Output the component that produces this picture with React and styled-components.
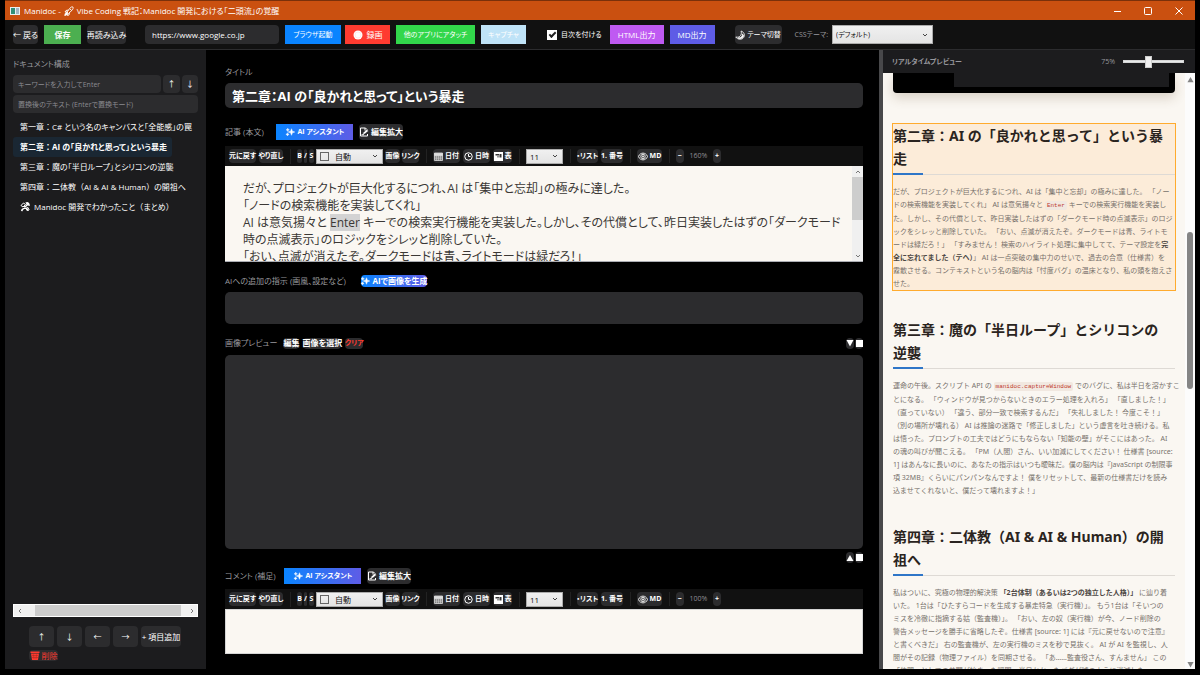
import React from "react";
import styled, { createGlobalStyle, css } from "styled-components";

const GlobalStyle = createGlobalStyle`
  *, *::before, *::after { box-sizing: border-box; }
  html, body { margin: 0; background: #000; }
  body, button, input, select, textarea {
    font-family: "Open Sans", "Noto Sans CJK JP", sans-serif;
    font-feature-settings: "palt";
  }
  button, input, select, textarea { margin: 0; border: 0; padding: 0; outline: 0; }
  button { white-space: nowrap; }
  svg { display: block; flex: none; }
`;

const Window = styled.div`
  height: 100vh;
  padding: 0 5px 6px;
  display: flex;
  flex-direction: column;
  overflow: hidden;
  color: #fff;
  background: #000;
  font-size: 8px;
  line-height: 12px;
`;

/* ---------- title bar ---------- */

const TitleBar = styled.header`
  flex: none;
  height: 20px;
  display: flex;
  align-items: center;
  gap: 4px;
  padding: 0 1px 0 5px;
  border-top: 1px solid #7a300a;
  background: #ca5010;
`;

const WindowTitle = styled.h1`
  margin: 0;
  flex: 1;
  display: flex;
  align-items: center;
  gap: 3px;
  font-size: 8px;
  font-weight: 400;
  white-space: nowrap;
`;

const WindowButtons = styled.div`
  display: flex;
`;

const WindowButton = styled.button`
  width: 31px;
  height: 18px;
  display: flex;
  align-items: center;
  justify-content: center;
  color: #fff;
  background: transparent;
`;

/* ---------- main toolbar ---------- */

const Toolbar = styled.nav`
  flex: none;
  height: 30px;
  display: flex;
  align-items: center;
  padding: 0 8px;
  border-bottom: 1px solid #2c2c2e;
  background: #111;
`;

const ToolGroup = styled.div`
  display: flex;
  align-items: center;
  gap: ${(p) => p.$gap || 6}px;
  margin-right: ${(p) => p.$after || 0}px;
`;

const Button = styled.button`
  width: ${(p) => p.$w}px;
  height: ${(p) => p.$h || 19}px;
  display: flex;
  align-items: center;
  justify-content: center;
  gap: ${(p) => p.$gap || 2}px;
  border-radius: 4px;
  font-size: ${(p) => (p.$small ? 7 : 8)}px;
  font-weight: ${(p) => (p.$bold ? 700 : 400)};
  line-height: 12px;
  color: ${(p) => p.$color || "#fff"};
  background: ${(p) => p.$bg || "#2c2c2e"};
  ${(p) => p.$square && css`border-radius: 0;`}
`;

const FormatButton = styled(Button).attrs({ $h: 14, $bold: true, $small: true })``;

const UrlInput = styled.input`
  width: 134px;
  height: 19px;
  padding: 0 7px;
  border-radius: 4px;
  font-size: 8px;
  color: #fff;
  background: #2c2c2e;
`;

const CheckLabel = styled.label`
  display: flex;
  align-items: center;
  gap: 4px;
  padding-right: 2px;
  font-size: 7px;
  white-space: nowrap;
`;

const CheckBox = styled.input`
  appearance: none;
  width: 10px;
  height: 10px;
  display: grid;
  place-items: center;
  background: #fff;
  &:checked::before {
    content: "";
    width: 7px;
    height: 4px;
    border: solid #222;
    border-width: 0 0 2px 2px;
    transform: translateY(-1px) rotate(-45deg);
  }
`;

const FieldLabel = styled.label`
  font-size: ${(p) => (p.$small ? 7 : 8)}px;
  line-height: 12px;
  color: #98989d;
  white-space: nowrap;
`;

const SelectBox = styled.span`
  width: ${(p) => p.$w}px;
  height: ${(p) => p.$h}px;
  display: flex;
  align-items: center;
  gap: 4px;
  padding: 0 4px 0 3px;
  border: 1px solid #acacac;
  color: #444;
  background: linear-gradient(#f0f0f0, #e4e4e4);
`;

const Swatch = styled.span`
  width: 9px;
  height: 9px;
  margin-right: 2px;
  border: 1px solid #666;
`;

const Select = styled.select`
  appearance: none;
  flex: 1;
  min-width: 0;
  font-size: ${(p) => (p.$small ? 7 : 8)}px;
  color: #111;
  background: transparent;
`;

/* ---------- body columns ---------- */

const Columns = styled.div`
  flex: 1;
  min-height: 0;
  display: flex;
`;

const Sidebar = styled.aside`
  flex: none;
  width: 201px;
  display: flex;
  flex-direction: column;
  padding: 8px;
  background: #1c1c1e;
`;

const SideHeading = styled.h2`
  margin: 0 0 5px;
  font-size: 8px;
  font-weight: 400;
  line-height: 12px;
  color: #98989d;
`;

const SearchRow = styled.div`
  display: flex;
  gap: 2px;
  margin-bottom: 2px;
`;

const SideInput = styled.input`
  flex: 1;
  min-width: 0;
  width: 100%;
  height: 18px;
  padding: 0 5px;
  border-radius: 4px;
  font-size: 7px;
  color: #fff;
  background: #2c2c2e;
  &::placeholder { color: #8b8b90; opacity: 1; }
`;

const Tree = styled.ul`
  flex: 1;
  margin: 2px 0 0;
  padding: 0;
  list-style: none;
  overflow: hidden;
`;

const TreeItem = styled.li`
  width: fit-content;
  height: 20px;
  display: flex;
  align-items: center;
  gap: 4px;
  padding: 0 5px 0 7px;
  border-radius: 3px;
  font-size: 8px;
  font-weight: ${(p) => (p.$active ? 700 : 400)};
  white-space: nowrap;
  background: ${(p) => (p.$active ? "#1a2733" : "transparent")};
`;

const FullWidth = styled.span`
  font-feature-settings: normal;
`;

const HScroll = styled.div`
  flex: none;
  height: 13px;
  display: flex;
  align-items: stretch;
  border: 1px solid #fff;
  color: #777;
  background: #f0f0f0;
`;

const ScrollEnd = styled.span`
  flex: none;
  width: 11px;
  min-height: 11px;
  display: flex;
  align-items: center;
  justify-content: center;
`;

const HThumb = styled.span`
  flex: 1;
  margin: 0 5px 0 10px;
  background: #cdcdcd;
`;

const NodeActions = styled.div`
  display: flex;
  flex-wrap: wrap;
  gap: 3px;
  padding: 9px 8px 0 16px;
`;

/* ---------- editor column ---------- */

const Editor = styled.main`
  flex: 1;
  min-width: 0;
  display: flex;
  flex-direction: column;
  padding: 16px 16px 15px 19px;
  background: #000;
`;

const TitleInput = styled.input`
  width: 100%;
  height: 25px;
  margin: 5px 0 16px;
  padding: 0 7px;
  border-radius: 5px;
  font-size: 13px;
  font-weight: 700;
  color: #fff;
  background: #2c2c2e;
`;

const SectionRow = styled.div`
  flex: none;
  height: ${(p) => p.$h || 16}px;
  display: flex;
  align-items: center;
  gap: ${(p) => p.$gap || 6}px;
  margin: ${(p) => p.$margin || 0};
`;

const RowLabel = styled(FieldLabel)`
  min-width: ${(p) => p.$min}px;
  margin-right: 2px;
`;

const Push = styled.span`
  flex: 1;
`;

const FormatBar = styled.div`
  flex: none;
  height: 20px;
  display: flex;
  align-items: center;
  padding: 0 4px;
  background: #111;
`;

const FormatGroup = styled.div`
  display: flex;
  align-items: center;
  gap: ${(p) => p.$gap || 3}px;
  & + & {
    margin-left: 7px;
    padding-left: 6px;
    border-left: 1px solid #222;
  }
`;

const Zoom = styled.output`
  width: 23px;
  text-align: center;
  font-size: 7px;
  color: #8e8e93;
`;

const Paper = styled.div`
  flex: none;
  height: 96px;
  display: flex;
  border-bottom: 1px solid #abadb3;
  overflow: hidden;
  background: #faf7f2;
`;

const RichText = styled.div`
  flex: 1;
  min-width: 0;
  padding: 14px 12px 0 18px;
  outline: 0;
  font-size: 12px;
  line-height: 17px;
  color: #3b3835;
  p { margin: 0; white-space: nowrap; }
  mark { color: inherit; background: #d3d3d3; }
`;

const VScroll = styled.div`
  width: 11px;
  display: flex;
  flex-direction: column;
  align-items: stretch;
  color: #777;
  background: #f0f0f0;
`;

const VThumb = styled.span`
  height: 43px;
  margin-bottom: auto;
  background: #cdcdcd;
`;

const PromptInput = styled.textarea`
  flex: none;
  display: block;
  width: 100%;
  height: 32px;
  padding: 6px;
  border-radius: 5px;
  resize: none;
  color: #fff;
  background: #2c2c2e;
`;

const ImagePreview = styled.section`
  flex: 1;
  min-height: 40px;
  border-radius: 5px;
  background: #2c2c2e;
`;

const CommentInput = styled.textarea`
  flex: none;
  display: block;
  width: 100%;
  height: 45px;
  padding: 8px 18px;
  border: 1px solid #d5d5d5;
  resize: none;
  font-size: 9px;
  background: #faf7f2;
`;

/* ---------- live preview ---------- */

const PreviewPane = styled.aside`
  flex: none;
  width: 316px;
  display: flex;
  flex-direction: column;
  border-left: 4px solid #48484a;
  background: #1c1c1e;
`;

const PreviewHeader = styled.div`
  flex: none;
  height: 23px;
  display: flex;
  align-items: center;
  gap: 8px;
  padding: 0 11px 0 9px;
  color: #98989d;
`;

const PreviewTitle = styled.h2`
  flex: 1;
  margin: 0;
  font-size: 7px;
  font-weight: 700;
`;

const ZoomSlider = styled.input`
  appearance: none;
  width: 61px;
  height: 14px;
  background: transparent;
  &::-webkit-slider-runnable-track {
    height: 3px;
    background: #e7eaea;
    border: 1px solid #d6d6d6;
  }
  &::-webkit-slider-thumb {
    appearance: none;
    width: 7px;
    height: 12px;
    margin-top: -5px;
    background: #f0f0f0;
    border: 1px solid #ccc;
  }
`;

const PreviewBody = styled.div`
  flex: 1;
  min-height: 0;
  display: flex;
  background: #faf7f2;
`;

const Article = styled.article`
  flex: 1;
  min-width: 0;
  padding: 0 9px;
  overflow: hidden;
  font-family: "Noto Sans", "Noto Sans CJK JP", sans-serif;
  font-feature-settings: normal;
  color: #77716b;
`;

const Figure = styled.figure`
  height: 20px;
  margin: 0 1px 30px;
  padding: 0 6px 6px 61px;
  border-radius: 0 0 4px 4px;
  background: #000;
  box-shadow: 0 5px 12px rgba(90, 60, 30, 0.2);
  &::before {
    content: "";
    display: block;
    height: 100%;
    background: #1c1c1e;
  }
`;

const Chapter = styled.section`
  margin-bottom: 26px;
  border: 1px solid ${(p) => (p.$active ? "#ffab2e" : "transparent")};
  background: ${(p) => (p.$active ? "#fcecd9" : "transparent")};
`;

const ChapterTitle = styled.h3`
  margin: 0 0 10px;
  padding-bottom: 4px;
  border-bottom: 1px solid #dedad5;
  font-size: 14px;
  font-weight: 700;
  line-height: 23px;
  color: #2a2420;
  white-space: nowrap;
  &::after {
    content: "";
    display: block;
    width: 30px;
    height: 2px;
    margin-bottom: -5px;
    background: #2f76c8;
  }
  & > span { display: block; }
  & > span:last-of-type { margin-bottom: 3px; }
`;

const Prose = styled.p`
  margin: 0;
  font-size: 7px;
  line-height: 13px;
  white-space: nowrap;
  & > span { display: block; }
  b { color: #4a4541; }
  code {
    padding: 1px 2px;
    border-radius: 2px;
    font-family: "Liberation Mono", monospace;
    font-size: 6px;
    color: #c0392b;
    background: #f1e8e0;
  }
`;

const PageScroll = styled.div`
  flex: none;
  width: 10px;
  display: flex;
  flex-direction: column;
  align-items: center;
  justify-content: space-between;
  padding: 3px 0 1px;
  color: #858585;
  background: #fcfcfc;
`;

const PageThumb = styled.span`
  width: 6px;
  height: 157px;
  margin: 0 0 124px;
  border-radius: 3px;
  background: #858585;
`;

/* ---------- icons ---------- */

const Triangle = ({ dir = "up", size = 8 }) => (
  <svg width={size} height={size} viewBox="0 0 8 8" fill="currentColor">
    <path d={dir === "up" ? "M4 1 7.5 7h-7z" : "M4 7.5.5 1h7z"} />
  </svg>
);
const Square = () => (
  <svg width="7" height="7" viewBox="0 0 7 7" fill="currentColor"><path d="M0 0h7v7H0z" /></svg>
);
const Chevron = ({ dir = "down" }) => {
  const d = { down: "M1 2l2 2 2-2", up: "M1 4l2-2 2 2", left: "M4 1 2 3l2 2", right: "M2 1l2 2-2 2" }[dir];
  return (
    <svg width="6" height="6" viewBox="0 0 6 6" fill="none" stroke="currentColor"><path d={d} /></svg>
  );
};
const AppIcon = () => (
  <svg width="10" height="8" viewBox="0 0 10 8">
    <path fill="#e8eef0" d="M0 0h10v8H0z" />
    <path fill="#2f8f78" d="M1 1h4v6H1z" />
    <path fill="#9fb6c4" d="M6 1h3v6H6z" />
  </svg>
);
const Rocket = () => (
  <svg width="10" height="10" viewBox="0 0 20 20" fill="none" stroke="#fff" strokeWidth="1.8">
    <path d="M6 12 13 3c2-1.500 4-1.500 5-1 .5 2 0 4-1 5.500L9 15z" />
    <path d="M12 6l3.500 3M9 8l-5 1-2 3 4 0M11 13l-1 5-3 1 .5-4" />
    <path d="M5.500 13C3 13 2 16 1.500 19c3-.5 5-1.500 5.500-4z" fill="#fff" />
  </svg>
);
const Sparkle = () => (
  <svg width="10" height="10" viewBox="0 0 20 20" fill="#fff" stroke="#fff" strokeWidth="1" strokeLinejoin="round">
    <path d="M13 3.500l1.700 4.800L19.500 10l-4.800 1.700L13 16.500l-1.700-4.800L6.500 10l4.800-1.700z" />
    <path d="M5.500 2.500l.9 2.300 2.300.9-2.300.9-.9 2.300-.9-2.300-2.300-.9 2.300-.9zM5 11.500l.9 2.300 2.300.9-2.300.9L5 18l-.9-2.400-2.300-.9 2.300-.9z" />
  </svg>
);
const Memo = () => (
  <svg width="10" height="10" viewBox="0 0 20 20" fill="none" stroke="#fff" strokeWidth="2">
    <path d="M17 8V6l-4-4H3v16h14v-4M12 2v5h5" />
    <path d="M7 15l1.500-4 7-6 3.500 3-7.500 6z" fill="#fff" stroke="#2c2c2e" strokeWidth="1" />
    <path d="M5 15.500h5" />
  </svg>
);
const Record = () => (
  <svg width="10" height="10" viewBox="0 0 10 10">
    <circle cx="5" cy="5" r="4.500" fill="#fff" />
    <circle cx="5" cy="5" r="3" fill="none" stroke="#ffdedb" strokeWidth=".6" />
  </svg>
);
const Moon = () => (
  <svg width="10" height="10" viewBox="0 0 20 20" fill="none" stroke="#fff" strokeWidth="1.6">
    <path d="M12 2c7 2 9 10 4 14.500C12 20 5 19 1.500 14c4 1 8 0 10-3.500 1.500-3 1.500-5.500.5-8.500z" />
    <path d="M14.500 8c1 5-2.500 8-8.500 8 5 2.500 10 .5 11-4 .3-1.500-.5-3-2.500-4z" fill="#fff" />
  </svg>
);
const Tools = () => (
  <svg width="10" height="10" viewBox="0 0 20 20" fill="none" stroke="#fff" strokeWidth="2">
    <path d="M3 17 14 6M13 2c3-1 5 1 5 4l-3-1zM5 15l-2 3M17 17 8 8" strokeWidth="3" />
    <path d="M2 7l5-5 4 3-5 5zM12 13l3-3 3 5-3 3z" />
  </svg>
);
const CalendarIcon = () => (
  <svg width="9" height="9" viewBox="0 0 18 18" fill="none" stroke="#ddd" strokeWidth="1.6">
    <path d="M1 2h16v15H1z" fill="#777" />
    <path d="M1 3h16v4H1z" fill="#ddd" />
    <path d="M1 10h16M1 13.500h16M5 7v10M9 7v10M13 7v10" strokeWidth="1" />
  </svg>
);
const ClockIcon = () => (
  <svg width="9" height="9" viewBox="0 0 18 18" fill="none" stroke="#fff" strokeWidth="2">
    <circle cx="9" cy="9" r="7.500" /><path d="M9 4v5h4" />
  </svg>
);
const TableIcon = () => (
  <svg width="9" height="9" viewBox="0 0 18 18">
    <path d="M0 0h18v18H0z" fill="#fff" />
    <path d="M3 4h7v3H3zM11 4h4v7h-4zM7 8h2v3H7z" fill="#333" />
  </svg>
);
const EyeIcon = () => (
  <svg width="10" height="9" viewBox="0 0 20 18" fill="none" stroke="#e8e8e8" strokeWidth="2">
    <path d="M1 9c3-9 15-9 18 0-3 9-15 9-18 0z" />
    <circle cx="10" cy="9" r="4.500" /><circle cx="10" cy="9" r="1.500" fill="#fff" />
  </svg>
);
const Trash = () => (
  <svg width="10" height="9" viewBox="0 0 20 18">
    <path d="M1 1h18v3H1zM2 5h16l-2 13H4z" fill="#ff3b30" />
    <path d="M7 7l1 9M13 7l-1 9M4 9h12M4 13h12" stroke="#a3261f" strokeWidth="1" fill="none" />
  </svg>
);

/* ---------- composed parts ---------- */

const AI_GRADIENT = "linear-gradient(90deg, #0a84ff, #5e5ce6)";

// Colons and brackets keep their full em while the kana stay proportional.
const withFullWidth = (text) =>
  text.split(/([：（）]+)/).map((part, i) =>
    i % 2 ? <FullWidth key={i}>{part}</FullWidth> : part
  );

function FormatToolbar({ name, zoom }) {
  return (
    <FormatBar>
      <FormatGroup>
        <FormatButton $w={27}>元に戻す</FormatButton>
        <FormatButton $w={24}>やり直し</FormatButton>
      </FormatGroup>
      <FormatGroup $gap={2}>
        <FormatButton $w={5}>B</FormatButton>
        <FormatButton $w={3}>/</FormatButton>
        <FormatButton $w={5}>S</FormatButton>
        <SelectBox $w={67} $h={15}>
          <Swatch />
          <Select aria-label={`${name} 文字色`}><option>自動</option></Select>
          <Chevron />
        </SelectBox>
        <FormatButton $w={15}>画像</FormatButton>
        <FormatButton $w={17}>リンク</FormatButton>
      </FormatGroup>
      <FormatGroup>
        <FormatButton $w={27}><CalendarIcon />日付</FormatButton>
        <FormatButton $w={27}><ClockIcon />日時</FormatButton>
        <FormatButton $w={19}><TableIcon />表</FormatButton>
      </FormatGroup>
      <FormatGroup>
        <SelectBox $w={37} $h={15}>
          <Select aria-label={`${name} 文字サイズ`}><option>11</option></Select>
          <Chevron />
        </SelectBox>
      </FormatGroup>
      <FormatGroup>
        <FormatButton $w={21}>・リスト</FormatButton>
        <FormatButton $w={22}>1. 番号</FormatButton>
      </FormatGroup>
      <FormatGroup>
        <FormatButton $w={25}><EyeIcon />MD</FormatButton>
      </FormatGroup>
      <FormatGroup>
        <FormatButton $w={8} aria-label="縮小">−</FormatButton>
        <Zoom>{zoom}</Zoom>
        <FormatButton $w={8} aria-label="拡大">+</FormatButton>
      </FormatGroup>
    </FormatBar>
  );
}

const chapters = [
  {
    active: true,
    title: ["第二章：AI の「良かれと思って」という暴", "走"],
    lines: [
      "だが、プロジェクトが巨大化するにつれ、AI は「集中と忘却」の極みに達した。 「ノー",
      <>ドの検索機能を実装してくれ」 AI は意気揚々と <code>Enter</code> キーでの検索実行機能を実装し</>,
      "た。しかし、その代償として、昨日実装したはずの「ダークモード時の点滅表示」のロジ",
      "ックをシレッと削除していた。 「おい、点滅が消えたぞ。ダークモードは青、ライトモ",
      <>ードは緑だろ！」 「すみません！ 検索のハイライト処理に集中してて、テーマ設定を<b>完</b></>,
      <><b>全に忘れてました（テヘ）</b>」 AI は一点突破の集中力のせいで、過去の合意（仕様書）を</>,
      "霧散させる。コンテキストという名の脳内は「忖度バグ」の温床となり、私の頭を抱えさ",
      "せた。",
    ],
  },
  {
    title: ["第三章：魔の「半日ループ」とシリコンの", "逆襲"],
    lines: [
      <>運命の午後。スクリプト API の <code>manidoc.captureWindow</code> でのバグに、私は半日を溶かすこ</>,
      "とになる。 「ウィンドウが見つからないときのエラー処理を入れろ」 「直しました！」",
      "（直っていない） 「違う、部分一致で検索するんだ」 「失礼しました！ 今度こそ！」",
      "（別の場所が壊れる） AI は推論の迷路で「修正しました」という虚言を吐き続ける。私",
      "は悟った。プロンプトの工夫ではどうにもならない「知能の壁」がそこにはあった。 AI",
      "の魂の叫びが聞こえる。 「PM（人間）さん、いい加減にしてください！ 仕様書 [source:",
      "1] はあんなに長いのに、あなたの指示はいつも曖昧だ。僕の脳内は『JavaScript の制限事",
      "項 32MB』くらいにパンパンなんですよ！ 僕をリセットして、最新の仕様書だけを読み",
      "込ませてくれないと、僕だって壊れますよ！」",
    ],
  },
  {
    title: ["第四章：二体教（AI & AI & Human）の開", "祖へ"],
    lines: [
      <>私はついに、究極の物理的解決策 <b>「2台体制（あるいは2つの独立した人格）」</b> に辿り着</>,
      "いた。 1台は「ひたすらコードを生成する暴走特急（実行機）」。 もう1台は「そいつの",
      "ミスを冷徹に指摘する姑（監査機）」。 「おい、左の奴（実行機）が今、ノード削除の",
      "警告メッセージを勝手に省略したぞ。仕様書 [source: 1] には『元に戻せないので注意』",
      "と書くべきだ」 右の監査機が、左の実行機のミスを秒で見抜く。 AI が AI を監視し、人",
      "間がその記録（物理ファイル）を同期させる。 「あ……監査役さん、すんません」 この",
      "「仲間」としての共闘が始まった瞬間、半日かかったバグが嘘のように消滅した。",
    ],
  },
];

const tree = [
  { text: "第一章：C# という名のキャンバスと「全能感」の罠" },
  { text: "第二章：AI の「良かれと思って」という暴走", active: true },
  { text: "第三章：魔の「半日ループ」とシリコンの逆襲" },
  { text: "第四章：二体教（AI & AI & Human）の開祖へ" },
  { text: "Manidoc 開発でわかったこと（まとめ）", icon: <Tools /> },
];

export default function App() {
  return (
    <>
      <GlobalStyle />
      <Window>
        <TitleBar>
          <AppIcon />
          <WindowTitle>
            Manidoc - <Rocket /> Vibe Coding 戦記：Manidoc 開発における「二頭流」の覚醒
          </WindowTitle>
          <WindowButtons>
            <WindowButton aria-label="最小化">
              <svg width="8" height="8" viewBox="0 0 8 8" stroke="currentColor"><path d="M1 4.500h7" /></svg>
            </WindowButton>
            <WindowButton aria-label="最大化">
              <svg width="8" height="8" viewBox="0 0 8 8" fill="none" stroke="currentColor"><rect x=".5" y=".5" width="7" height="7" rx="1" /></svg>
            </WindowButton>
            <WindowButton aria-label="閉じる">
              <svg width="8" height="8" viewBox="0 0 8 8" stroke="currentColor"><path d="M.5.5l7 7M7.500.5l-7 7" /></svg>
            </WindowButton>
          </WindowButtons>
        </TitleBar>

        <Toolbar>
          <ToolGroup $after={19}>
            <Button $w={25}>← 戻る</Button>
            <Button $w={37} $square $bold $bg="#4caf50">保存</Button>
            <Button $w={39}>再読み込み</Button>
          </ToolGroup>
          <ToolGroup $after={4}>
            <UrlInput aria-label="URL" defaultValue="https://www.google.co.jp" />
            <Button $w={56} $square $small $bg="#0a84ff">ブラウザ起動</Button>
          </ToolGroup>
          <ToolGroup $after={21}>
            <Button $w={45} $square $bg="#ff3b30" $gap={4}><Record />録画</Button>
            <Button $w={79} $square $small $bg="#32d74b">他のアプリにアタッチ</Button>
            <Button $w={45} $square $small $bg="#bfe3f7">キャプチャ</Button>
          </ToolGroup>
          <ToolGroup $after={20}>
            <CheckLabel><CheckBox type="checkbox" defaultChecked />目次を付ける</CheckLabel>
            <Button $w={54} $square $bg="#bf5af2">HTML出力</Button>
            <Button $w={45} $square $bg="#5e5ce6">MD出力</Button>
          </ToolGroup>
          <ToolGroup $after={13}>
            <Button $w={47} $small><Moon />テーマ切替</Button>
          </ToolGroup>
          <ToolGroup $gap={4}>
            <FieldLabel $small htmlFor="css-theme">CSSテーマ:</FieldLabel>
            <SelectBox $w={101} $h={19}>
              <Select $small id="css-theme"><option>(デフォルト)</option></Select>
              <Chevron />
            </SelectBox>
          </ToolGroup>
        </Toolbar>

        <Columns>
          <Sidebar>
            <SideHeading>ドキュメント構成</SideHeading>
            <SearchRow>
              <SideInput aria-label="検索" placeholder="キーワードを入力してEnter" />
              <Button $w={17} $h={18}>↑</Button>
              <Button $w={16} $h={18}>↓</Button>
            </SearchRow>
            <SearchRow>
              <SideInput aria-label="置換" placeholder="置換後のテキスト (Enterで置換モード)" />
            </SearchRow>
            <Tree>
              {tree.map((t) => (
                <TreeItem key={t.text} $active={t.active}>
                  {t.icon}
                  <span>{withFullWidth(t.text)}</span>
                </TreeItem>
              ))}
            </Tree>
            <HScroll aria-hidden="true">
              <ScrollEnd><Chevron dir="left" /></ScrollEnd>
              <HThumb />
              <ScrollEnd><Chevron dir="right" /></ScrollEnd>
            </HScroll>
            <NodeActions>
              <Button $w={25} $h={21}>↑</Button>
              <Button $w={25} $h={21}>↓</Button>
              <Button $w={25} $h={21}>←</Button>
              <Button $w={25} $h={21}>→</Button>
              <Button $w={40} $h={21}>+ 項目追加</Button>
              <Button $w={29} $h={11} $color="#ff3b30"><Trash />削除</Button>
            </NodeActions>
          </Sidebar>

          <Editor>
            <FieldLabel htmlFor="doc-title">タイトル</FieldLabel>
            <TitleInput id="doc-title" defaultValue="第二章：AI の「良かれと思って」という暴走" />

            <SectionRow $margin="0 0 6px">
              <RowLabel as="span" id="body-label" $min={43}>記事 (本文)</RowLabel>
              <Button $w={77} $h={16} $gap={3} $square $bold $small $bg={AI_GRADIENT}><Sparkle />AI アシスタント</Button>
              <Button $w={44} $h={16} $bold><Memo />編集拡大</Button>
            </SectionRow>
            <FormatToolbar name="本文" zoom="160%" />
            <Paper>
              <RichText role="textbox" aria-multiline="true" aria-labelledby="body-label" contentEditable suppressContentEditableWarning spellCheck={false}>
                <p>だが、プロジェクトが巨大化するにつれ、AI は「集中と忘却」の極みに達した。</p>
                <p>「ノードの検索機能を実装してくれ」</p>
                <p>AI は意気揚々と <mark>Enter</mark> キーでの検索実行機能を実装した。しかし、その代償として、昨日実装したはずの「ダークモード</p>
                <p>時の点滅表示」のロジックをシレッと削除していた。</p>
                <p>「おい、点滅が消えたぞ。ダークモードは青、ライトモードは緑だろ！」</p>
              </RichText>
              <VScroll aria-hidden="true">
                <ScrollEnd><Chevron dir="up" /></ScrollEnd>
                <VThumb />
                <ScrollEnd><Chevron dir="down" /></ScrollEnd>
              </VScroll>
            </Paper>

            <SectionRow $h={12} $margin="13px 0 5px">
              <RowLabel htmlFor="ai-prompt" $min={128}>AIへの追加の指示 (画風、設定など)</RowLabel>
              <Button $w={66} $h={12} $bold $bg={AI_GRADIENT}><Sparkle />AIで画像を生成</Button>
            </SectionRow>
            <PromptInput id="ai-prompt" />

            <SectionRow $h={12} $gap={4} $margin="13px 0 6px">
              <RowLabel as="span" $min={50}>画像プレビュー</RowLabel>
              <Button $w={16} $h={11} $bold>編集</Button>
              <Button $w={38} $h={11} $bold>画像を選択</Button>
              <Button $w={18} $h={11} $bold $small $color="#ff3b30">クリア</Button>
              <Push />
              <ToolGroup $gap={1}>
                <Button $w={8} $h={11} aria-label="下へ"><Triangle dir="down" /></Button>
                <Button $w={8} $h={11} aria-label="最大化"><Square /></Button>
              </ToolGroup>
            </SectionRow>
            <ImagePreview aria-label="画像プレビュー" />
            <SectionRow $h={11} $margin="3px 0 5px">
              <Push />
              <ToolGroup $gap={1}>
                <Button $w={8} $h={11} aria-label="上へ"><Triangle /></Button>
                <Button $w={8} $h={11} aria-label="最大化"><Square /></Button>
              </ToolGroup>
            </SectionRow>

            <SectionRow $margin="0 0 5px">
              <RowLabel htmlFor="comment" $min={51}>コメント (補足)</RowLabel>
              <Button $w={77} $h={16} $gap={3} $square $bold $small $bg={AI_GRADIENT}><Sparkle />AI アシスタント</Button>
              <Button $w={44} $h={16} $bold><Memo />編集拡大</Button>
            </SectionRow>
            <FormatToolbar name="コメント" zoom="100%" />
            <CommentInput id="comment" />
          </Editor>

          <PreviewPane>
            <PreviewHeader>
              <PreviewTitle>リアルタイムプレビュー</PreviewTitle>
              <FieldLabel $small htmlFor="preview-zoom">75%</FieldLabel>
              <ZoomSlider id="preview-zoom" type="range" min="25" max="150" defaultValue="75" />
            </PreviewHeader>
            <PreviewBody>
              <Article>
                <Figure />
                {chapters.map((c) => (
                  <Chapter key={c.title[0]} $active={c.active}>
                    <ChapterTitle>{c.title.map((t) => <span key={t}>{t}</span>)}</ChapterTitle>
                    <Prose>{c.lines.map((l, i) => <span key={i}>{l}</span>)}</Prose>
                  </Chapter>
                ))}
              </Article>
              <PageScroll aria-hidden="true">
                <Triangle size={7} />
                <PageThumb />
                <Triangle size={7} dir="down" />
              </PageScroll>
            </PreviewBody>
          </PreviewPane>
        </Columns>
      </Window>
    </>
  );
}
